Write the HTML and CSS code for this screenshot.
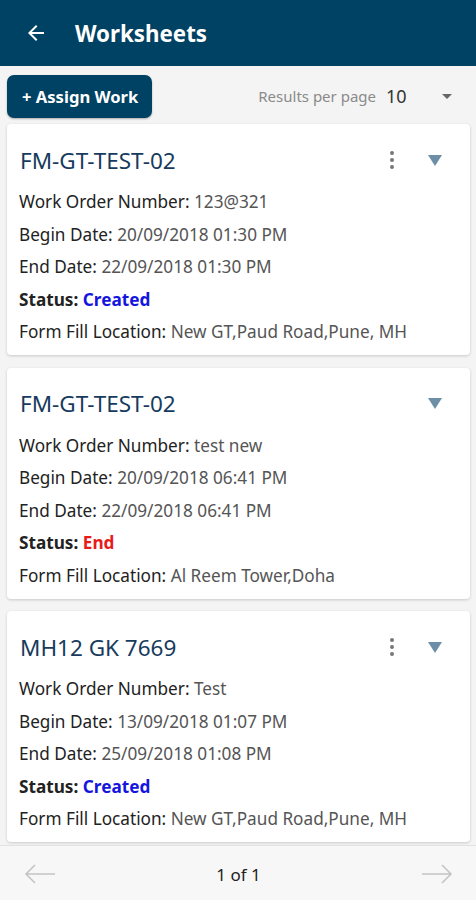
FILE: index.html
```html
<!DOCTYPE html>
<html lang="en">
<head>
    <meta charset="UTF-8">
    <meta name="viewport" content="width=device-width, initial-scale=1.0">
    <title>Worksheets</title>
    <link rel="stylesheet" href="styles.css">
</head>
<body>
    <header class="app-bar">
        <svg class="back" width="24" height="24" viewBox="0 0 24 24">
            <path d="M20 11H7.83l5.59-5.59L12 4l-8 8 8 8 1.41-1.41L7.83 13H20v-2z" fill="#fff"/>
        </svg>
        <h1>Worksheets</h1>
    </header>

    <div class="toolbar">
        <button class="assign-btn">+ Assign Work</button>
        <div class="per-page">
            <span class="per-page-label">Results per page</span>
            <span class="per-page-value">10</span>
            <span class="caret small"></span>
        </div>
    </div>

    <section class="list">
        <div class="card">
            <div class="card-head">
                <h2>FM-GT-TEST-02</h2>
                <span class="dots"><i></i><i></i><i></i></span>
                <span class="caret"></span>
            </div>
            <p><span class="label">Work Order Number:</span> 123@321</p>
            <p><span class="label">Begin Date:</span> 20/09/2018 01:30 PM</p>
            <p><span class="label">End Date:</span> 22/09/2018 01:30 PM</p>
            <p class="status"><span class="label">Status:</span> <span class="created">Created</span></p>
            <p><span class="label">Form Fill Location:</span> New GT,Paud Road,Pune, MH</p>
        </div>

        <div class="card">
            <div class="card-head">
                <h2>FM-GT-TEST-02</h2>
                <span class="caret"></span>
            </div>
            <p><span class="label">Work Order Number:</span> test new</p>
            <p><span class="label">Begin Date:</span> 20/09/2018 06:41 PM</p>
            <p><span class="label">End Date:</span> 22/09/2018 06:41 PM</p>
            <p class="status"><span class="label">Status:</span> <span class="ended">End</span></p>
            <p><span class="label">Form Fill Location:</span> Al Reem Tower,Doha</p>
        </div>

        <div class="card">
            <div class="card-head">
                <h2>MH12 GK 7669</h2>
                <span class="dots"><i></i><i></i><i></i></span>
                <span class="caret"></span>
            </div>
            <p><span class="label">Work Order Number:</span> Test</p>
            <p><span class="label">Begin Date:</span> 13/09/2018 01:07 PM</p>
            <p><span class="label">End Date:</span> 25/09/2018 01:08 PM</p>
            <p class="status"><span class="label">Status:</span> <span class="created">Created</span></p>
            <p><span class="label">Form Fill Location:</span> New GT,Paud Road,Pune, MH</p>
        </div>
    </section>

    <footer class="pager">
        <svg width="34" height="24" viewBox="0 0 34 24">
            <path d="M32 12H3M12 3l-9 9 9 9" fill="none" stroke="#c4c4c4" stroke-width="1.6"/>
        </svg>
        <span class="page-info">1 of 1</span>
        <svg width="34" height="24" viewBox="0 0 34 24">
            <path d="M2 12h29M22 3l9 9-9 9" fill="none" stroke="#c4c4c4" stroke-width="1.6"/>
        </svg>
    </footer>
</body>
</html>
```

FILE: styles.css
```css
/* Basic styles */
body {
    font-family: "Noto Sans", "Open Sans", sans-serif;
    margin: 0;
    padding: 0;
    background-color: #f4f4f4;
    color: #222;
    height: 900px;
    overflow: hidden;
}

.app-bar {
    height: 66px;
    background-color: #004263;
    display: flex;
    align-items: center;
    padding: 0 0 0 24px;
    box-sizing: border-box;
}
.app-bar h1 {
    margin: 0 0 0 27px;
    color: #fff;
    font-size: 22.3px;
    font-weight: 700;
}

.toolbar {
    display: flex;
    align-items: center;
    justify-content: space-between;
    padding: 8px 24px 0 7px;
    height: 44px;
}
.assign-btn {
    background-color: #004263;
    color: #fff;
    border: none;
    border-radius: 7px;
    height: 43px;
    padding: 0 14px 0 15px;
    font-family: inherit;
    font-size: 16.6px;
    font-weight: 700;
    box-shadow: 0 1px 2px rgba(0, 0, 0, 0.3);
}
.per-page {
    display: flex;
    align-items: center;
}
.per-page-label {
    color: #8a8a8a;
    font-size: 15px;
}
.per-page-value {
    color: #333;
    font-size: 18px;
    margin-left: 10px;
    width: 56px;
}

.caret {
    width: 0;
    height: 0;
    border-left: 7px solid transparent;
    border-right: 7px solid transparent;
    border-top: 11px solid #6c8ea6;
    margin-left: 34px;
    margin-right: 16px;
}
.caret.small {
    border-left-width: 5px;
    border-right-width: 5px;
    border-top: 5px solid #666;
    margin: 0;
}

.list {
    padding: 6px 6px 0 7px;
}
.card {
    background-color: #fff;
    border-radius: 4px;
    box-shadow: 0 1px 3px rgba(0, 0, 0, 0.18);
    padding: 12px 12px 6.5px 12px;
    margin-bottom: 12.5px;
}
.card-head {
    display: flex;
    align-items: center;
    height: 48px;
    margin-bottom: 2px;
}
.card-head h2 {
    flex: 1;
    margin: 0;
    font-size: 22.5px;
    font-weight: 400;
    color: #173b5d;
    padding-left: 1px;
}
.dots {
    display: flex;
    flex-direction: column;
    gap: 3px;
}
.dots i {
    width: 4px;
    height: 4px;
    border-radius: 50%;
    background-color: #777;
}
.card p {
    margin: 0;
    height: 32.5px;
    line-height: 32.5px;
    font-size: 17.2px;
    color: #555;
}
.card .label {
    color: #222;
}
.card .status {
    font-weight: 700;
}
.created {
    color: #1515e0;
}
.ended {
    color: #e81b1b;
}

.pager {
    position: fixed;
    bottom: 0;
    left: 0;
    width: 100%;
    height: 55px;
    box-sizing: border-box;
    background-color: #f7f7f7;
    border-top: 1px solid #e2e2e2;
    display: flex;
    align-items: center;
    justify-content: space-between;
    padding: 2px 22px 0 23px;
}
.page-info {
    font-size: 17px;
    color: #222;
}
```
